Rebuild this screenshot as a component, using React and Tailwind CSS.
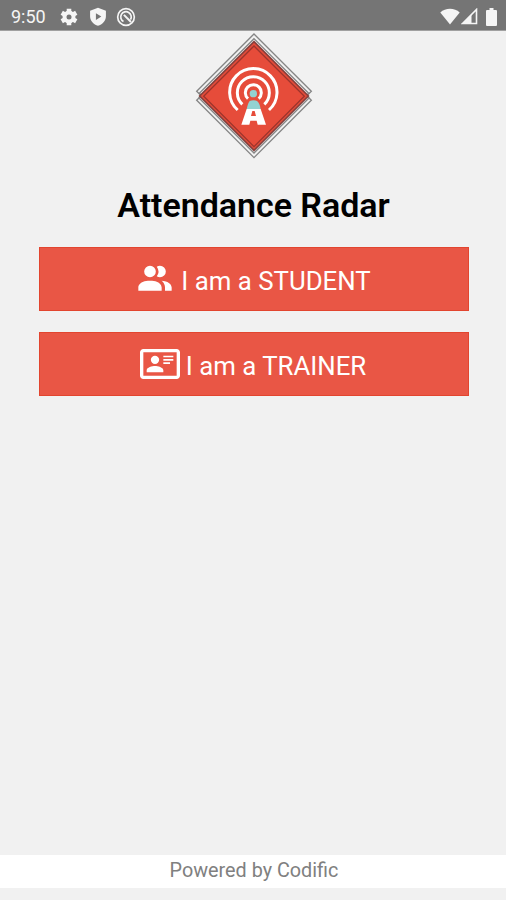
import React from 'react'

const SettingsIcon = () => (
  <svg className="w-[20px] h-[20px]" viewBox="0 0 24 24">
    <g stroke="currentColor" strokeWidth="5.500">
      <path d="M12 2v20M3.300 7l17.400 10M3.300 17 20.700 7" />
    </g>
    <circle cx="12" cy="12" r="5.500" fill="none" stroke="currentColor" strokeWidth="4.500" />
    <circle cx="12" cy="12" r="3" fill="#757575" />
  </svg>
)

const ShieldIcon = () => (
  <svg className="w-[20px] h-[20px]" viewBox="0 0 24 24" fill="currentColor" fillRule="evenodd">
    <path d="M12 1 2.500 4.500V11c0 5.500 4.300 10.200 9.500 11.500 5.200-1.300 9.500-6 9.500-11.500V4.500zM9.500 7.500v8l6.500-4z" />
  </svg>
)

const CircleIcon = () => (
  <svg className="w-[20px] h-[20px]" viewBox="0 0 24 24" fill="none" stroke="currentColor" strokeWidth="2">
    <circle cx="12" cy="12" r="10" />
    <path d="M9 17.500a6.300 6.300 0 1 1 8.400-2.300" />
    <path d="m9.500 9.500 8.500 8.500" strokeWidth="2.400" />
  </svg>
)

const StatusBar = () => (
  <div className="flex h-[31px] items-center justify-between border-b border-[#a0a0a0] bg-[#757575] pl-[11px] pr-[9px] pt-[3px] text-[#f5f5f5]">
    <div className="flex items-center">
      <span className="w-[48px] text-[18px] leading-none">9:50</span>
      <SettingsIcon />
      <span className="ml-[9px]"><ShieldIcon /></span>
      <span className="ml-[8px]"><CircleIcon /></span>
    </div>
    <div className="flex items-center">
      <svg className="h-[17px] w-[20px]" viewBox="0 0 20 17" fill="currentColor">
        <path d="M10 16.500.300 4.500C3 2 6.300.800 10 .800s7 1.200 9.700 3.700z" />
      </svg>
      <svg className="ml-[1px] h-[17px] w-[17px]" viewBox="0 0 17 17">
        <path d="M1.500 15.500 15.500 1.500v14z" fill="none" stroke="currentColor" strokeWidth="1.600" />
        <path d="M1 16 10.500 6.500V16z" fill="currentColor" />
      </svg>
      <svg className="ml-[8px] h-[18px] w-[11px]" viewBox="0 0 11 18" fill="currentColor">
        <path d="M3.500 0h4v2H10a1 1 0 0 1 1 1v14a1 1 0 0 1-1 1H1a1 1 0 0 1-1-1V3a1 1 0 0 1 1-1h2.500z" />
      </svg>
    </div>
  </div>
)

const Logo = () => (
  <svg className="h-[134px] w-[128px]" viewBox="0 0 384 402" fill="none">
    {/* outlines peeking out above and below the filled diamond */}
    <g stroke="#858585" strokeWidth="4">
      <path d="M192 18 364 190 192 362 20 190z" />
      <path d="M192 32 356 196 192 360 28 196z" />
      <path d="M192 45 364 217 192 389 20 217z" />
      <path d="M192 45 357 210 192 375 27 210z" />
    </g>
    <path d="M192 41 355 204 192 367 29 204z" fill="#e64c3a" stroke="#873f3b" strokeWidth="5" />
    <path d="M192 54 343 205 192 356 41 205z" stroke="#9b342c" strokeWidth="4" />
    <g stroke="#fff" strokeWidth="9">
      <path d="M143 246a71 71 0 1 1 94 0" />
      <path d="M157 229a48 48 0 1 1 66 0" />
      <path d="M174 212a24 24 0 1 1 32 0" />
    </g>
    <circle cx="190" cy="197" r="11" fill="#93d2d1" />
    <path d="M179 219q11-5 22 0 8 5 11 25h-42q4-20 9-25z" fill="#93d2d1" />
    <path d="M170 243h42l16 47h-25l-3-12h-19l-3 12h-24zM187 249l-4 15h15l-4-15z" fill="#fff" fillRule="evenodd" />
  </svg>
)

const StudentIcon = () => (
  <svg className="h-10 w-10" viewBox="0 0 24 24" fill="currentColor">
    <path d="M16 17V19H2V17S2 13 9 13 16 17 16 17M12.5 7.5A3.5 3.5 0 1 0 9 11A3.5 3.5 0 0 0 12.5 7.5M15.94 13A5.32 5.32 0 0 1 18 17V19H22V17S22 13.37 15.94 13M15 4A3.39 3.39 0 0 0 13.07 4.59A5 5 0 0 1 13.07 10.41A3.39 3.39 0 0 0 15 11A3.5 3.5 0 0 0 15 4Z" />
  </svg>
)

const TrainerIcon = () => (
  <svg className="h-10 w-10" viewBox="0 0 24 24" fill="currentColor">
    <path d="M22 3H2C.91 3.04.04 3.91 0 5V19C.04 20.09.91 20.96 2 21H22C23.09 20.96 23.96 20.09 24 19V5C23.96 3.91 23.09 3.04 22 3M22 19H2V5H22V19M14 17V15.75C14 14.09 10.66 13.25 9 13.25C7.34 13.25 4 14.09 4 15.75V17H14M9 7A2.5 2.5 0 0 0 6.500 9.500A2.500 2.500 0 0 0 9 12A2.500 2.500 0 0 0 11.500 9.500A2.500 2.500 0 0 0 9 7M14 7V8H20V7H14M14 9V10H20V9H14M14 11V12H18V11H14" />
  </svg>
)

const RoleButton = ({ icon, label }) => (
  <button className="flex h-16 w-full items-center justify-center border border-[#e2452f] bg-[#e95645] pr-[1px] text-[25.800px] text-white">
    {icon}
    <span className="ml-[6px] mt-[5px] whitespace-nowrap leading-none">{label}</span>
  </button>
)

const App = () => {
  return (
    <div className="flex h-[900px] w-[506px] flex-col overflow-hidden bg-[#f1f1f1] font-['Roboto',sans-serif]">
      <StatusBar />
      <main className="flex flex-1 flex-col items-center pl-[1px]">
        <div className="-mt-[3px]"><Logo /></div>
        <h1 className="mt-[22px] whitespace-nowrap text-[34px] font-semibold leading-[42px] tracking-[-0.03px] text-black">Attendance Radar</h1>
        <div className="mt-[21px] flex w-[430px] flex-col gap-[21px]">
          <RoleButton icon={<StudentIcon />} label="I am a STUDENT" />
          <RoleButton icon={<TrainerIcon />} label="I am a TRAINER" />
        </div>
      </main>
      <footer className="mb-3 h-[33px] bg-white pl-[2px] text-center text-[19.800px] leading-[31px] text-[#808080]">Powered by Codific</footer>
    </div>
  )
}

export default App
